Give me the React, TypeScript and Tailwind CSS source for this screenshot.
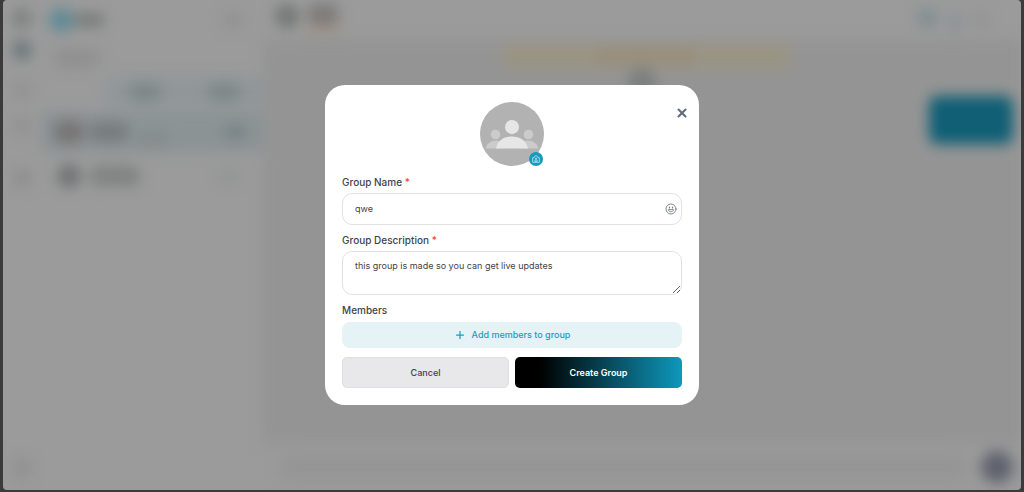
import { useState } from "react";
import { Plus, X } from "lucide-react";

function GroupAvatar() {
  return (
    <svg viewBox="0 0 64 64" className="size-16" aria-hidden="true">
      <circle cx="32" cy="32" r="32" fill="#b2b2b2" />
      <g fill="#cbcbcb">
        <circle cx="15.5" cy="32.5" r="4.8" />
        <circle cx="48.5" cy="32.5" r="4.8" />
        <path d="M5.5 46.5C7 41.500 11 38.500 15.500 38.500S24 41 25 46.500Z" />
        <path d="M39 46.500C40 41 44 38.500 48.500 38.500S57 41.500 58.500 46.500Z" />
      </g>
      <circle cx="32" cy="25" r="8" fill="#b2b2b2" />
      <circle cx="32" cy="25" r="7" fill="#e6e6e6" />
      <path
        d="M16 46.500C17.500 38.500 24 34.500 32 34.500S46.500 38.500 48 46.500Z"
        fill="#e6e6e6"
      />
    </svg>
  );
}

function CameraIcon() {
  return (
    <svg
      viewBox="0 0 24 24"
      className="size-2"
      fill="none"
      stroke="#c9eaf3"
      strokeWidth="2.2"
      strokeLinejoin="round"
      aria-hidden="true"
    >
      <path d="M2 8h4l2-4 4-2 4 2 2 4h4v14H2Z" />
      <circle cx="12" cy="11" r="2.2" />
      <path d="M8 19v-2q4-5 8 0v2Z" />
    </svg>
  );
}

function SmileIcon() {
  return (
    <svg
      viewBox="0 0 24 24"
      className="size-3"
      fill="none"
      stroke="#737b87"
      strokeWidth="1.8"
      strokeLinecap="round"
      aria-hidden="true"
    >
      <circle cx="12" cy="12" r="10" />
      <path d="M7 14c1 2.500 2.800 3.500 5 3.500s4-1 5-3.500Z" />
      <path d="M9 8v2M15 8v2" strokeWidth="2.400" />
    </svg>
  );
}

// The chat screen behind the dialog, seen only as soft shapes
function Backdrop() {
  return (
    <div
      className="col-start-1 row-start-1 flex overflow-hidden rounded-[4px] bg-[#9b9b9b]"
      aria-hidden="true"
    >
      <div className="flex w-full blur-[7px]">
        <div className="flex w-[38px] shrink-0 flex-col items-center pt-2 pb-3">
          <div className="size-5 rounded-full bg-[#7b817f]" />
          <div className="mt-3 size-5 rounded-full bg-[#6b7679]" />
          <div className="mt-5 size-5 rounded-full bg-[#929292]" />
          <div className="mt-4 size-5 rounded-full bg-[#929292]" />
          <div className="mt-8 size-5 rounded-full bg-[#8e8e8e]" />
          <div className="mt-auto size-5 rounded-full bg-[#909090]" />
        </div>

        <div className="flex w-[222px] shrink-0 flex-col pt-2">
          <div className="flex items-center px-2">
            <div className="size-6 rounded-full bg-[#5f8a97]" />
            <div className="h-3 w-8 rounded-full bg-[#737876]" />
            <div className="mr-3 ml-auto size-5 rounded-full bg-[#929292]" />
          </div>
          <div className="mt-4 ml-3 h-5 w-12 rounded-full bg-[#909090]" />
          <div className="mt-2 ml-16 flex h-8 items-center justify-around bg-[#919799]">
            <div className="h-4 w-8 rounded-full bg-[#7a8486]" />
            <div className="h-4 w-8 rounded-full bg-[#7a8486]" />
          </div>
          <div className="mt-1 flex h-10 items-center bg-[#8b9395] px-3">
            <div className="h-6 w-8 rounded-full bg-[#787575]" />
            <div className="ml-1 h-5 w-10 rounded-full bg-[#777b7d]" />
            <div className="mt-4 ml-2 h-3 w-8 rounded-full bg-[#868a8b]" />
            <div className="mr-1 ml-auto h-4 w-6 rounded-full bg-[#798487]" />
          </div>
          <div className="mt-2 flex h-8 items-center px-4">
            <div className="size-6 rounded-full bg-[#707475]" />
            <div className="ml-2 h-5 w-13 rounded-full bg-[#7f8382]" />
            <div className="mr-2 ml-auto h-3 w-5 rounded-full bg-[#909293]" />
          </div>
        </div>

        <div className="flex min-w-0 grow flex-col">
          <div className="flex h-10 items-start px-3 pt-1">
            <div className="size-6 rounded-full bg-[#727776]" />
            <div className="ml-2">
              <div className="h-5 w-8 rounded-full bg-[#7c7979]" />
              <div className="h-2 w-8 bg-[#9e9080]" />
            </div>
            <div className="mt-1 ml-auto size-5 rounded-full bg-[#7f8d91]" />
            <div className="mt-2 ml-2 size-5 rounded-full bg-[#8e9496]" />
            <div className="mt-2 mr-5 ml-2 size-4 rounded-full bg-[#929292]" />
          </div>
          <div className="flex grow flex-col bg-[#949494]">
            <div className="mt-1 ml-2 flex h-6 w-[290px] items-center justify-center self-center rounded-lg bg-[#999483]">
              <div className="h-4 w-24 bg-[#998e7b]" />
            </div>
            <div className="size-7 self-center rounded-full bg-[#7b7e7f]" />
            <div className="mr-2 h-12 w-21 self-end rounded-lg bg-[#105f75]" />
          </div>
          <div className="flex h-[46px] items-center gap-3 pr-2 pl-4">
            <div className="h-6 grow rounded-full bg-[#959595]" />
            <div className="size-8 rounded-full bg-[#5e626e]" />
          </div>
        </div>
      </div>
    </div>
  );
}

function CreateGroupDialog() {
  const [name, setName] = useState("qwe");
  const [description, setDescription] = useState(
    "this group is made so you can get live updates",
  );

  return (
    <div
      role="dialog"
      aria-modal="true"
      aria-label="Create Group"
      className="relative w-full max-w-[374px] rounded-[20px] bg-white p-[17px] text-[#3f4348]"
    >
      <button
        type="button"
        aria-label="Close"
        className="absolute top-5 right-[9px] flex size-4 items-center justify-center text-[#626d7b]"
      >
        <X className="size-[14px]" strokeWidth={3.5} />
      </button>

      <form onSubmit={(e) => e.preventDefault()}>
        <div className="relative mx-auto size-16">
          <GroupAvatar />
          <button
            type="button"
            aria-label="Change group photo"
            className="absolute right-px bottom-0 flex size-[14px] items-center justify-center rounded-full bg-[#169bbd]"
          >
            <CameraIcon />
          </button>
        </div>

        <label
          htmlFor="group-name"
          className="mt-2 block text-[10px] leading-4 font-medium"
        >
          Group Name <span className="text-[#ff3b3b]">*</span>
        </label>
        <div className="mt-[3px] flex h-8 items-center rounded-[10px] border border-[#e0e1e3] pr-1 pl-3">
          <input
            id="group-name"
            type="text"
            value={name}
            onChange={(e) => setName(e.target.value)}
            className="min-w-0 grow bg-transparent text-[9px] outline-none"
          />
          <button type="button" aria-label="Insert emoji">
            <SmileIcon />
          </button>
        </div>

        <label
          htmlFor="group-description"
          className="mt-[7px] block text-[10px] leading-4 font-medium"
        >
          Group Description <span className="text-[#ff3b3b]">*</span>
        </label>
        <textarea
          id="group-description"
          value={description}
          onChange={(e) => setDescription(e.target.value)}
          className="mt-[3px] block h-11 w-full rounded-[10px] border border-[#e0e1e3] px-3 py-[7px] text-[9px] leading-[14px] outline-none"
        />

        <div className="mt-[7px] text-[10px] leading-4 font-medium">
          Members
        </div>
        <button
          type="button"
          className="mt-1 flex h-[26px] w-full items-center justify-center gap-[6px] rounded-[8px] bg-[#e5f3f7] text-[9px] font-medium text-[#199dbf]"
        >
          <Plus className="size-3" strokeWidth={2.5} />
          Add members to group
        </button>

        <div className="mt-[9px] grid grid-cols-2 gap-[6px]">
          <button
            type="button"
            className="h-[31px] rounded-[5px] border border-[#dfdfe1] bg-[#e8e8ea] text-[9px] font-medium"
          >
            Cancel
          </button>
          <button
            type="submit"
            className="h-[31px] rounded-[5px] bg-linear-to-r/srgb from-black from-15% to-[#0e98bd] text-[9px] font-semibold text-white"
          >
            Create Group
          </button>
        </div>
      </form>
    </div>
  );
}

export default function App() {
  return (
    <div className="grid min-h-screen bg-[#3b3b3b] pr-[3px] pb-[2px] pl-[3px] font-['Inter',sans-serif]">
      <Backdrop />
      <div className="z-10 col-start-1 row-start-1 flex items-center justify-center">
        <CreateGroupDialog />
      </div>
    </div>
  );
}
